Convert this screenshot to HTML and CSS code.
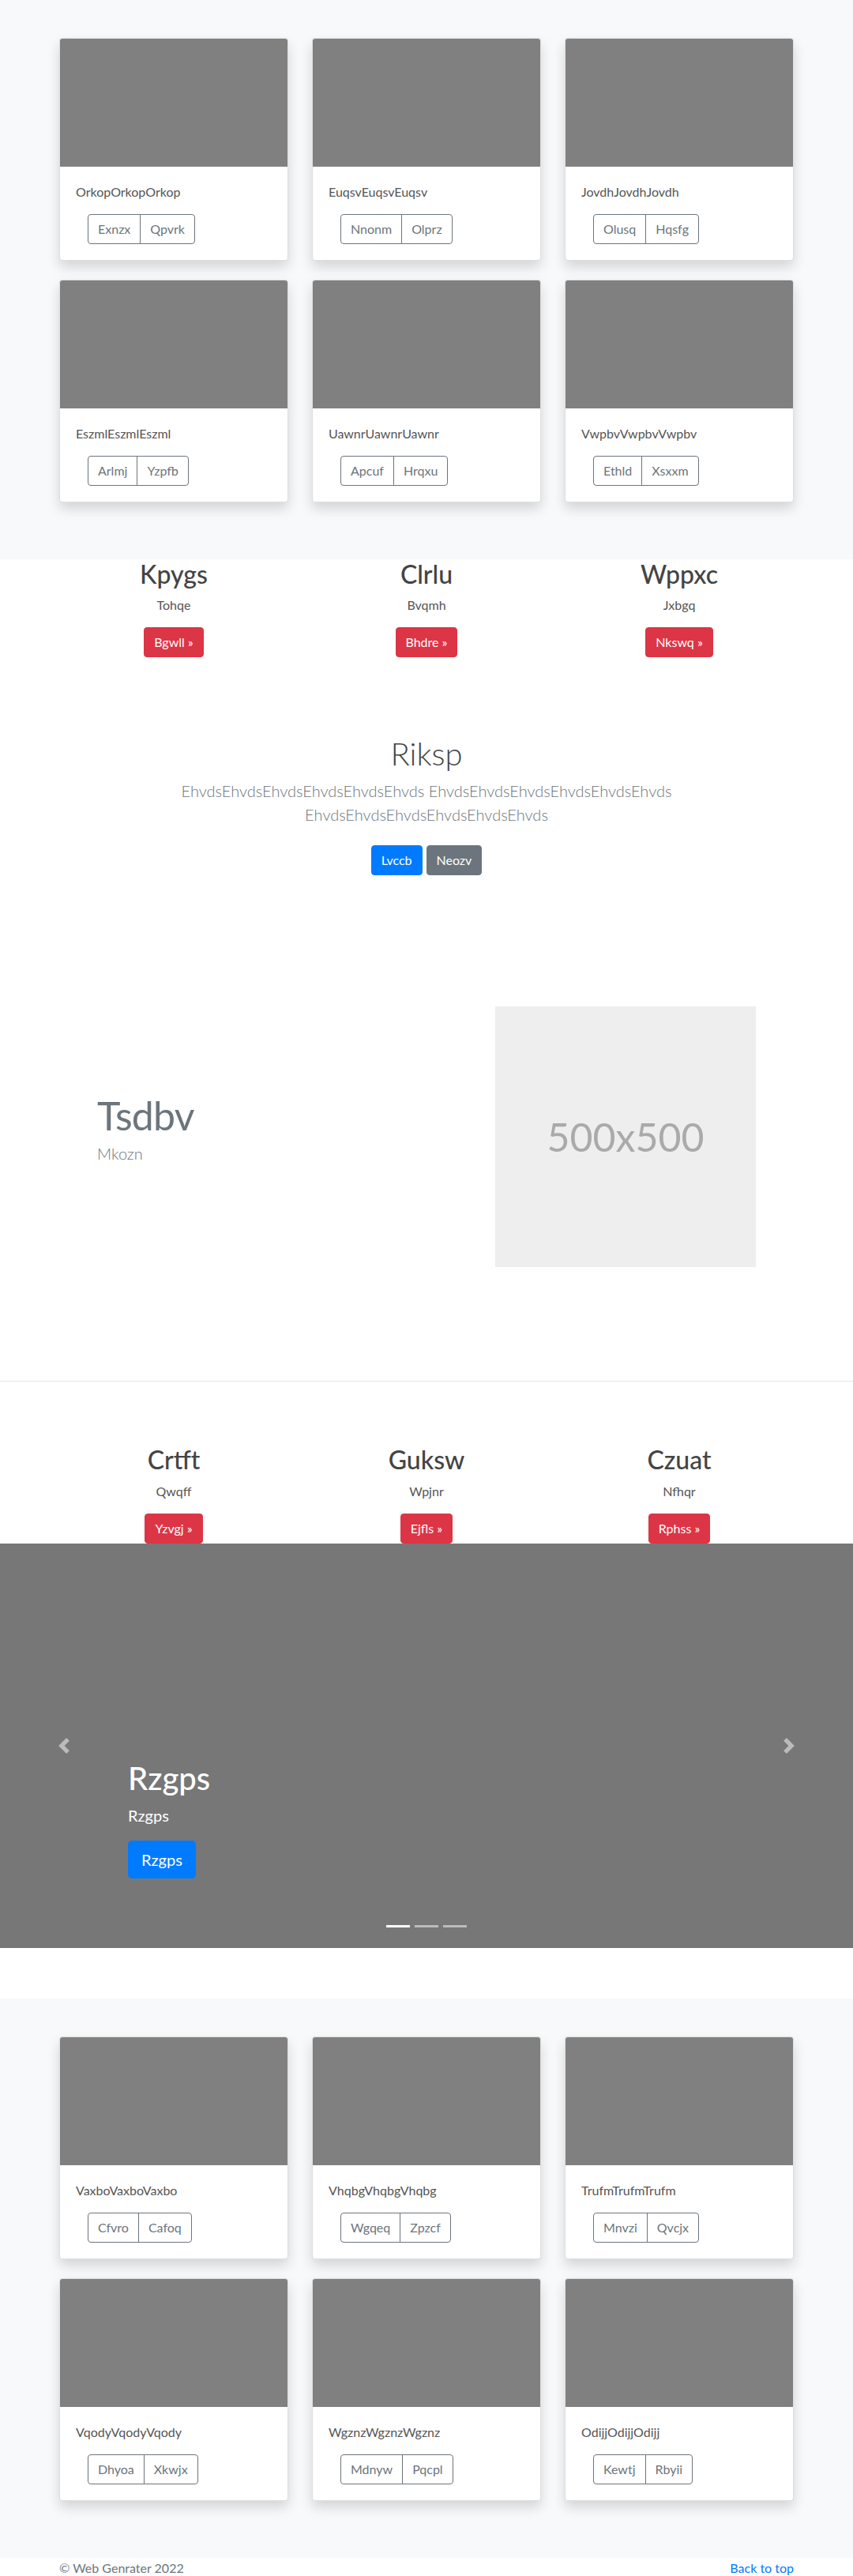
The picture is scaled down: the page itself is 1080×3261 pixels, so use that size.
FILE: index.html
```html
<!DOCTYPE html>
<html lang="en">
<head>
<meta charset="utf-8">
<title>Web Genrater</title>
<link rel="stylesheet" href="styles.css">
</head>
<body>

<section class="album">
  <div class="container card-grid">
    <div class="card"><div class="card-img"></div><div class="card-body"><p class="card-text">OrkopOrkopOrkop</p><div class="btn-group"><button class="btn btn-outline">Exnzx</button><button class="btn btn-outline">Qpvrk</button></div></div></div>
    <div class="card"><div class="card-img"></div><div class="card-body"><p class="card-text">EuqsvEuqsvEuqsv</p><div class="btn-group"><button class="btn btn-outline">Nnonm</button><button class="btn btn-outline">Olprz</button></div></div></div>
    <div class="card"><div class="card-img"></div><div class="card-body"><p class="card-text">JovdhJovdhJovdh</p><div class="btn-group"><button class="btn btn-outline">Olusq</button><button class="btn btn-outline">Hqsfg</button></div></div></div>
    <div class="card"><div class="card-img"></div><div class="card-body"><p class="card-text">EszmlEszmlEszml</p><div class="btn-group"><button class="btn btn-outline">Arlmj</button><button class="btn btn-outline">Yzpfb</button></div></div></div>
    <div class="card"><div class="card-img"></div><div class="card-body"><p class="card-text">UawnrUawnrUawnr</p><div class="btn-group"><button class="btn btn-outline">Apcuf</button><button class="btn btn-outline">Hrqxu</button></div></div></div>
    <div class="card"><div class="card-img"></div><div class="card-body"><p class="card-text">VwpbvVwpbvVwpbv</p><div class="btn-group"><button class="btn btn-outline">Ethld</button><button class="btn btn-outline">Xsxxm</button></div></div></div>
  </div>
</section>

<section class="features features-first">
  <div class="container feature-grid">
    <div class="feature"><h2>Kpygs</h2><p>Tohqe</p><button class="btn btn-danger">Bgwll &raquo;</button></div>
    <div class="feature"><h2>Clrlu</h2><p>Bvqmh</p><button class="btn btn-danger">Bhdre &raquo;</button></div>
    <div class="feature"><h2>Wppxc</h2><p>Jxbgq</p><button class="btn btn-danger">Nkswq &raquo;</button></div>
  </div>
</section>

<section class="jumbo">
  <div class="container">
    <h1 class="jumbo-heading">Riksp</h1>
    <p class="lead jumbo-lead">EhvdsEhvdsEhvdsEhvdsEhvdsEhvds EhvdsEhvdsEhvdsEhvdsEhvdsEhvds EhvdsEhvdsEhvdsEhvdsEhvdsEhvds</p>
    <p class="jumbo-actions"><button class="btn btn-primary">Lvccb</button><button class="btn btn-secondary">Neozv</button></p>
  </div>
</section>

<section class="featurette">
  <div class="container feat-row">
    <div class="feat-text">
      <h2 class="feat-heading">Tsdbv</h2>
      <p class="lead feat-lead">Mkozn</p>
    </div>
    <div class="placeholder">500x500</div>
  </div>
</section>

<section class="features features-second">
  <div class="container feature-grid">
    <div class="feature"><h2>Crtft</h2><p>Qwqff</p><button class="btn btn-danger">Yzvgj &raquo;</button></div>
    <div class="feature"><h2>Guksw</h2><p>Wpjnr</p><button class="btn btn-danger">Ejfls &raquo;</button></div>
    <div class="feature"><h2>Czuat</h2><p>Nfhqr</p><button class="btn btn-danger">Rphss &raquo;</button></div>
  </div>
</section>

<div class="carousel">
  <div class="carousel-caption">
    <h1>Rzgps</h1>
    <p class="caption-text">Rzgps</p>
    <p class="caption-action"><a class="btn btn-lg btn-primary" href="#">Rzgps</a></p>
  </div>
  <a class="carousel-control control-prev" href="#" aria-label="Previous">
    <svg width="20" height="20" viewBox="0 0 8 8"><path fill="#fff" d="M5.25 0l-4 4 4 4 1.5-1.5L4.25 4l2.5-2.5L5.25 0z"/></svg>
  </a>
  <a class="carousel-control control-next" href="#" aria-label="Next">
    <svg width="20" height="20" viewBox="0 0 8 8"><path fill="#fff" d="M2.75 0l-1.5 1.5L3.75 4l-2.5 2.5L2.75 8l4-4-4-4z"/></svg>
  </a>
  <ol class="indicators">
    <li class="active"></li>
    <li></li>
    <li></li>
  </ol>
</div>

<section class="album">
  <div class="container card-grid">
    <div class="card"><div class="card-img"></div><div class="card-body"><p class="card-text">VaxboVaxboVaxbo</p><div class="btn-group"><button class="btn btn-outline">Cfvro</button><button class="btn btn-outline">Cafoq</button></div></div></div>
    <div class="card"><div class="card-img"></div><div class="card-body"><p class="card-text">VhqbgVhqbgVhqbg</p><div class="btn-group"><button class="btn btn-outline">Wgqeq</button><button class="btn btn-outline">Zpzcf</button></div></div></div>
    <div class="card"><div class="card-img"></div><div class="card-body"><p class="card-text">TrufmTrufmTrufm</p><div class="btn-group"><button class="btn btn-outline">Mnvzi</button><button class="btn btn-outline">Qvcjx</button></div></div></div>
    <div class="card"><div class="card-img"></div><div class="card-body"><p class="card-text">VqodyVqodyVqody</p><div class="btn-group"><button class="btn btn-outline">Dhyoa</button><button class="btn btn-outline">Xkwjx</button></div></div></div>
    <div class="card"><div class="card-img"></div><div class="card-body"><p class="card-text">WgznzWgznzWgznz</p><div class="btn-group"><button class="btn btn-outline">Mdnyw</button><button class="btn btn-outline">Pqcpl</button></div></div></div>
    <div class="card"><div class="card-img"></div><div class="card-body"><p class="card-text">OdijjOdijjOdijj</p><div class="btn-group"><button class="btn btn-outline">Kewtj</button><button class="btn btn-outline">Rbyii</button></div></div></div>
  </div>
</section>

<footer class="footer">
  <div class="container footer-row">
    <p class="copy">&copy; Web Genrater 2022</p>
    <p class="back"><a href="#">Back to top</a></p>
  </div>
</footer>

</body>
</html>
```

FILE: styles.css
```css
* { box-sizing: border-box; }

html, body {
  margin: 0;
  padding: 0;
}

body {
  font-family: Lato, "Open Sans", "Liberation Sans", sans-serif;
  font-size: 16px;
  line-height: 1.5;
  color: #555;
  background: #fff;
}

.container {
  width: 930px;
  margin: 0 auto;
}

/* ---------- buttons ---------- */
.btn {
  display: inline-block;
  font-family: inherit;
  font-size: 16px;
  line-height: 24px;
  font-weight: 400;
  padding: 6px 12px;
  border: 1px solid transparent;
  border-radius: 4px;
  text-decoration: none;
  cursor: pointer;
  margin: 0;
}

.btn-outline {
  background: transparent;
  color: #6c757d;
  border-color: #6c757d;
}

.btn-danger {
  background: #dc3545;
  border-color: #dc3545;
  color: #fff;
}

.btn-primary {
  background: #007bff;
  border-color: #007bff;
  color: #fff;
}

.btn-secondary {
  background: #6c757d;
  border-color: #6c757d;
  color: #fff;
}

.btn-lg {
  font-size: 20px;
  line-height: 30px;
  padding: 8px 16px;
  border-radius: 4.8px;
}

/* ---------- album ---------- */
.album {
  background: #f8f9fa;
  padding: 48px 0 72px;
}

.card-grid {
  display: grid;
  grid-template-columns: repeat(3, 1fr);
  column-gap: 30px;
  row-gap: 24px;
}

.card {
  background: #fff;
  border: 1px solid rgba(0, 0, 0, 0.125);
  border-radius: 4px;
  box-shadow: 0 8px 16px rgba(0, 0, 0, 0.15);
  overflow: hidden;
}

.card-img {
  height: 162px;
  background: #808080;
}

.card-body {
  padding: 20px;
}

.card-text {
  margin: 0 0 16px;
}

.btn-group {
  display: inline-flex;
  margin-left: 15px;
}

.btn-group .btn {
  border-radius: 0;
}

.btn-group .btn:first-child {
  border-radius: 4px 0 0 4px;
}

.btn-group .btn:last-child {
  border-radius: 0 4px 4px 0;
  margin-left: -1px;
}

/* ---------- features ---------- */
.features-first {
  padding: 0 0 50px;
}

.features-second {
  padding: 80px 0 0;
}

.feature-grid {
  display: grid;
  grid-template-columns: repeat(3, 1fr);
  column-gap: 30px;
}

.feature {
  text-align: center;
}

.feature h2 {
  font-size: 32px;
  font-weight: 500;
  line-height: 1.2;
  margin: 0 0 8px;
  color: #444;
}

.feature p {
  margin: 0 0 16px;
}

/* ---------- jumbotron ---------- */
.jumbo {
  padding: 48px 0;
  text-align: center;
}

.jumbo-heading {
  font-size: 40px;
  font-weight: 300;
  line-height: 1.2;
  margin: 0 0 8px;
  color: #444;
}

.lead {
  font-size: 20px;
  font-weight: 300;
  line-height: 1.5;
  color: #6c757d;
}

.jumbo-lead {
  max-width: 720px;
  margin: 0 auto 16px;
}

.jumbo-actions {
  display: flex;
  justify-content: center;
  gap: 5px;
  margin: 0;
  padding: 8px 0;
}

/* ---------- featurette ---------- */
.featurette {
  padding: 110px 0 144px;
  border-bottom: 1px solid #e5e5e5;
}

.feat-row {
  display: flex;
  align-items: center;
  padding: 0 48px;
}

.feat-text {
  flex: 1;
}

.feat-heading {
  font-size: 50px;
  font-weight: 400;
  line-height: 1;
  letter-spacing: -0.8px;
  color: #6c757d;
  margin: 0 0 8px;
}

.feat-lead {
  margin: 0 0 16px;
}

.placeholder {
  width: 330px;
  height: 330px;
  flex: none;
  background: #eee;
  color: #aaa;
  font-size: 50px;
  display: flex;
  align-items: center;
  justify-content: center;
}

/* ---------- carousel ---------- */
.carousel {
  position: relative;
  height: 512px;
  background: #777;
  margin-bottom: 64px;
}

.carousel-caption {
  position: absolute;
  left: 15%;
  right: 15%;
  bottom: 52px;
  padding: 20px 0;
  color: #fff;
  text-align: left;
  z-index: 2;
}

.carousel-caption h1 {
  font-size: 40px;
  font-weight: 500;
  line-height: 1.2;
  margin: 0 0 8px;
}

.carousel-caption p {
  margin: 0 0 16px;
}

.carousel-caption .caption-text {
  font-size: 20px;
  line-height: 30px;
}

.carousel-caption .caption-action {
  padding-top: 1px;
  line-height: 0;
}

.carousel-control {
  position: absolute;
  top: 0;
  bottom: 0;
  width: 15%;
  display: flex;
  align-items: center;
  justify-content: center;
  opacity: 0.5;
}

.control-prev { left: 0; }
.control-next { right: 0; }

.indicators {
  position: absolute;
  left: 0;
  right: 0;
  bottom: 0;
  margin: 0 0 16px;
  padding: 0;
  list-style: none;
  display: flex;
  justify-content: center;
}

.indicators li {
  width: 30px;
  height: 23px;
  margin: 0 3px;
  border-top: 10px solid transparent;
  border-bottom: 10px solid transparent;
  background: #fff;
  background-clip: padding-box;
  opacity: 0.5;
}

.indicators li.active {
  opacity: 1;
}

/* ---------- footer ---------- */
.footer {
  padding: 1px 0 48px;
  color: #6c757d;
}

.footer-row {
  display: flex;
  justify-content: space-between;
}

.footer p {
  margin: 0;
}

.footer a {
  color: #007bff;
  text-decoration: none;
}
```
